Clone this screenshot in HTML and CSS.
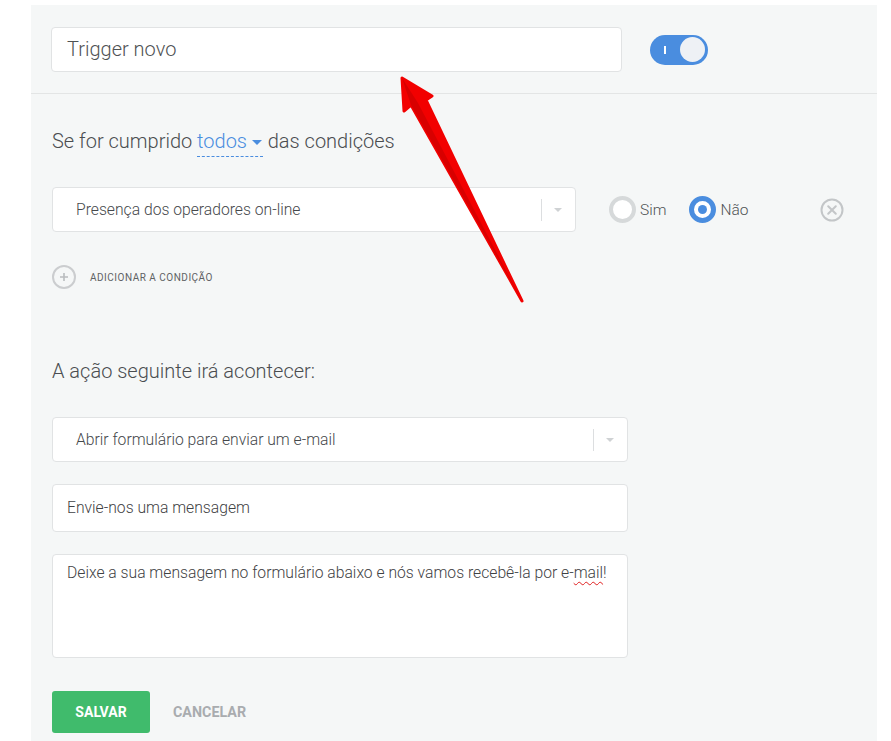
FILE: index.html
```html
<!DOCTYPE html>
<html lang="pt">
<head>
<meta charset="utf-8">
<link rel="stylesheet" href="styles.css">
</head>
<body>
<div class="panel">
  <div class="header">
    <div class="field title-field">Trigger novo</div>
    <div class="toggle"><span class="toggle-mark"></span><span class="toggle-knob"></span></div>
  </div>
  <div class="content">
    <div class="heading">Se for cumprido <span class="todos">todos <span class="caret"></span></span> das condições</div>
    <div class="cond-row">
      <div class="select select-cond">
        <span class="select-text">Presença dos operadores on-line</span>
        <span class="select-sep"></span>
        <span class="select-caret"></span>
      </div>
      <div class="radio-group">
        <span class="radio"></span><span class="radio-label">Sim</span>
        <span class="radio radio-on"></span><span class="radio-label">Não</span>
      </div>
      <svg class="remove" width="24" height="24" viewBox="0 0 24 24"><circle cx="12" cy="12" r="10.5" fill="none" stroke="#c3c6c8" stroke-width="2"/><path d="M8.2 8.2 L15.8 15.8 M15.8 8.2 L8.2 15.8" stroke="#c3c6c8" stroke-width="2" stroke-linecap="round"/></svg>
    </div>
    <div class="add-row">
      <svg width="24" height="24" viewBox="0 0 24 24"><circle cx="12" cy="12" r="11" fill="none" stroke="#cbcdcf" stroke-width="2"/><path d="M12 8 V16 M8 12 H16" stroke="#b9bcbe" stroke-width="1.6"/></svg>
      <span class="add-text">ADICIONAR A CONDIÇÃO</span>
    </div>
    <div class="heading heading-2">A ação seguinte irá acontecer:</div>
    <div class="select select-action">
      <span class="select-text">Abrir formulário para enviar um e-mail</span>
      <span class="select-sep"></span>
      <span class="select-caret"></span>
    </div>
    <div class="field input-field">Envie-nos uma mensagem</div>
    <div class="field textarea-field">Deixe a sua mensagem no formulário abaixo e nós vamos recebê-la por e-<span class="spell">mail</span>!</div>
    <div class="buttons">
      <span class="btn-save">SALVAR</span>
      <span class="btn-cancel">CANCELAR</span>
    </div>
  </div>
</div>
<svg class="arrow" width="891" height="741" viewBox="0 0 891 741">
  <polygon points="402,78 432,96 426,100 522,301 411,105 404,111" fill="#f20000" stroke="#f20000" stroke-width="3" stroke-linejoin="round"/>
  <polygon points="402,78 411,105 522,301 418,103" fill="#d80000"/>
</svg>
</body>
</html>
```
FILE: styles.css
```css
html, body {
  margin: 0;
  padding: 0;
  background: #ffffff;
}
body {
  font-family: Roboto, "Liberation Sans", Arial, sans-serif;
  color: #55585a;
  position: relative;
  width: 891px;
  height: 741px;
  overflow: hidden;
}
.panel {
  margin: 5px 0 0 31px;
  width: 846px;
  height: 736px;
  background: #f5f7f7;
}
.header {
  display: flex;
  align-items: center;
  padding: 22px 0 21px 20px;
  border-bottom: 1px solid #e3e5e5;
}
.field {
  background: #fff;
  border: 1px solid #e1e3e4;
  border-radius: 4px;
  box-sizing: border-box;
}
.title-field {
  width: 571px;
  height: 45px;
  font-size: 20px;
  font-weight: 300;
  color: #4f5254;
  padding: 0 0 0 15px;
  line-height: 43px;
}
.toggle {
  margin-left: 28px;
  width: 58px;
  height: 30px;
  border-radius: 15px;
  background: #4a8ddf;
  display: flex;
  align-items: center;
  box-sizing: border-box;
  padding: 0 3px 0 14px;
}
.toggle-mark {
  width: 2px;
  height: 8px;
  background: #fff;
}
.toggle-knob {
  margin-left: auto;
  width: 25px;
  height: 25px;
  border-radius: 50%;
  background: #eef1f5;
}
.content {
  padding: 35px 0 0 21px;
}
.heading {
  font-size: 20px;
  font-weight: 300;
  line-height: 24px;
  color: #4a4d50;
}
.todos {
  color: #4a8ddf;
  border-bottom: 1px dashed #4a8ddf;
  padding-bottom: 3px;
}
.caret {
  display: inline-block;
  width: 0;
  height: 0;
  border-left: 5px solid transparent;
  border-right: 5px solid transparent;
  border-top: 5px solid #4a8ddf;
  vertical-align: middle;
  margin-left: 0;
  margin-right: 1px;
}
.cond-row {
  margin-top: 34px;
  display: flex;
  align-items: center;
}
.select {
  display: flex;
  align-items: center;
  background: #fff;
  border: 1px solid #e1e3e4;
  border-radius: 4px;
  box-sizing: border-box;
  height: 45px;
  padding-left: 23px;
  font-size: 15.7px;
  font-weight: 300;
  color: #45484b;
}
.select-cond { width: 524px; }
.select-action { width: 576px; margin-top: 34px; }
.select-text { flex: 1; }
.select-sep {
  width: 1px;
  height: 22px;
  background: #dcdee0;
}
.select-caret {
  width: 0;
  height: 0;
  border-left: 4px solid transparent;
  border-right: 4px solid transparent;
  border-top: 4px solid #cfd2d4;
  margin: 0 13px 0 12px;
}
.radio-group {
  display: flex;
  align-items: center;
  margin-left: 33px;
  font-size: 15.5px;
  font-weight: 300;
  color: #4f5254;
}
.radio {
  width: 27px;
  height: 27px;
  box-sizing: border-box;
  border-radius: 50%;
  border: 4px solid #d6d9da;
  background: #fff;
}
.radio-label { margin-left: 4px; }
.radio-on {
  border: 5px solid #4a8ddf;
  background: #fff;
  position: relative;
  margin-left: 23px;
}
.radio-on::after {
  content: "";
  position: absolute;
  left: 4px;
  top: 4px;
  width: 9px;
  height: 9px;
  border-radius: 50%;
  background: #4a8ddf;
}
.remove {
  margin-left: 72px;
}
.add-row {
  margin-top: 33px;
  display: flex;
  align-items: center;
  height: 24px;
}
.add-text {
  margin-left: 14px;
  font-size: 10px;
  letter-spacing: 0.5px;
  color: #5f6264;
}
.heading-2 {
  margin-top: 70px;
}
.input-field {
  margin-top: 22px;
  width: 576px;
  height: 48px;
  font-size: 15.7px;
  font-weight: 300;
  color: #3f4244;
  line-height: 46px;
  padding-left: 14px;
}
.textarea-field {
  margin-top: 22px;
  width: 576px;
  height: 104px;
  font-size: 15.7px;
  font-weight: 300;
  color: #3f4244;
  padding: 9px 14px;
  line-height: 18px;
}
.spell {
  text-decoration: underline wavy #e02020;
  text-decoration-thickness: 1px;
  text-underline-offset: 3px;
}
.buttons {
  margin-top: 33px;
  display: flex;
  align-items: center;
}
.btn-save {
  width: 98px;
  height: 42px;
  border-radius: 3px;
  background: #40bb6c;
  color: #fff;
  font-weight: 700;
  font-size: 14px;
  display: flex;
  align-items: center;
  justify-content: center;
}
.btn-cancel {
  margin-left: 23px;
  color: #a9acaf;
  font-weight: 700;
  font-size: 14.3px;
}
.arrow {
  position: absolute;
  left: 0;
  top: 0;
  pointer-events: none;
}
```
